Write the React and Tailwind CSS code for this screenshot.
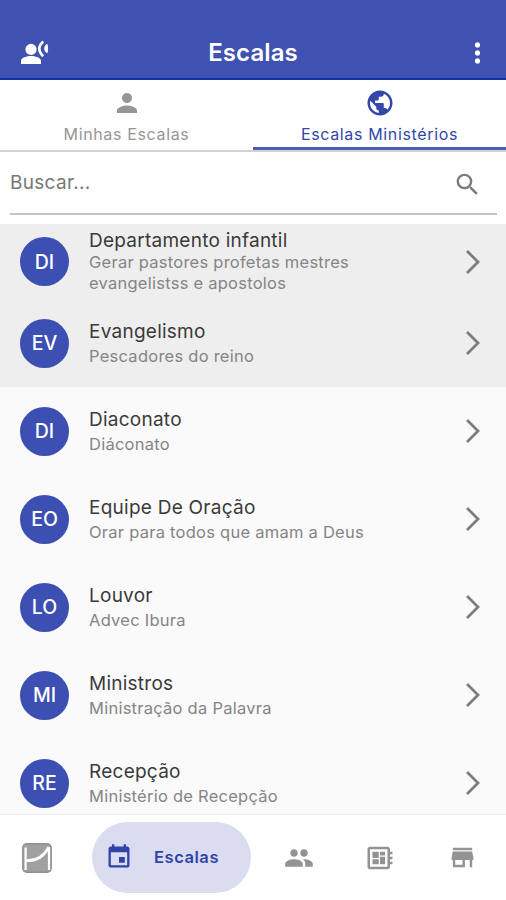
import { useState } from "react";
import {
  MdDeveloperBoard,
  MdEvent,
  MdMoreVert,
  MdPeople,
  MdPerson,
  MdPublic,
  MdSearch,
  MdStore,
} from "react-icons/md";

const ministries = [
  { initials: "DI", name: "Departamento infantil", description: "Gerar pastores profetas mestres evangelistss e apostolos", highlighted: true },
  { initials: "EV", name: "Evangelismo", description: "Pescadores do reino", highlighted: true },
  { initials: "DI", name: "Diaconato", description: "Diáconato" },
  { initials: "EO", name: "Equipe De Oração", description: "Orar para todos que amam a Deus" },
  { initials: "LO", name: "Louvor", description: "Advec Ibura" },
  { initials: "MI", name: "Ministros", description: "Ministração da Palavra" },
  { initials: "RE", name: "Recepção", description: "Ministério de Recepção" },
];

const VoiceIcon = () => (
  <svg viewBox="0 0 30 26" className="h-[26px] w-[30px]" fill="currentColor">
    <circle cx="11" cy="9.4" r="5.6" />
    <path d="M1 24 V21 C1 17.4 7 16 11 16 C15 16 21 17.4 21 21 V24 Z" />
    <path d="M23.2 1.4 C18 5.8 18 11.7 23.2 16.2" fill="none" stroke="currentColor" strokeWidth="2.6" />
    <path d="M27.2 3.8 C23.2 6.2 23.2 11 27.2 13.4 C28.4 11 28.4 6.2 27.2 3.8 Z" />
  </svg>
);

const Header = () => (
  <header className="flex h-20 shrink-0 items-end justify-between border-b-2 border-[#1631a2] bg-[#3f51b1] pr-3 pb-[9px] pl-5 text-white">
    <button className="flex h-8 w-[33px] items-center">
      <VoiceIcon />
    </button>
    <h1 className="mr-2 text-[24px] leading-8 font-semibold tracking-[0.1px]">Escalas</h1>
    <button className="flex h-8 w-[33px] items-center">
      <MdMoreVert className="h-8 w-[33px] shrink-0" />
    </button>
  </header>
);

const Tab = ({ icon: Icon, label, active, onClick }) => (
  <button
    onClick={onClick}
    className={`flex flex-1 flex-col items-center border-b-[3px] pt-2 ${
      active ? "border-[#4c5db5] text-[#3347aa]" : "border-transparent text-[#969696]"
    }`}
  >
    <Icon className="h-[30px] w-[30px]" />
    <span className="mt-1.5 text-[16px] leading-5 tracking-[0.65px]">{label}</span>
  </button>
);

const Chevron = () => (
  <svg viewBox="0 0 16 26" className="h-[26px] w-4 shrink-0" fill="none" stroke="#7d7d7d" strokeWidth="2.8">
    <path d="M2 2 L13 13 L2 24" />
  </svg>
);

const MinistryRow = ({ initials, name, description, highlighted }) => {
  const isLong = description.length > 40;

  return (
    <li
      className={`flex shrink-0 items-center pr-[25px] pl-5 ${isLong ? "h-[75px]" : "h-22"} ${
        highlighted ? "bg-[#eeeeee]" : ""
      }`}
    >
      <div className="flex h-[49px] w-[49px] shrink-0 items-center justify-center rounded-full bg-[#3c4fb3] pt-0.5 text-[19.5px] font-medium text-white">
        {initials}
      </div>
      <div className={`ml-5 flex-1 ${isLong ? "" : "pt-0.5"}`}>
        <p className={`text-[19px] tracking-[0.25px] text-[#3a3a3a] ${isLong ? "leading-[22px]" : "leading-[25px]"}`}>
          {name}
        </p>
        <p
          className={`w-[300px] text-[16.5px] tracking-[0.25px] text-[#858585] ${
            isLong ? "leading-[21px]" : "leading-[25px]"
          }`}
        >
          {description}
        </p>
      </div>
      <Chevron />
    </li>
  );
};

const LogoIcon = () => (
  <svg viewBox="0 0 30 30" className="h-[30px] w-[30px]" fill="none">
    <rect x="0.8" y="0.8" width="28.4" height="28.4" rx="4" fill="#a0a0a0" stroke="#8f8f8f" strokeWidth="1.4" />
    <path d="M3.6 4.5 V27 M27 4 V27" stroke="#fff" strokeWidth="2.2" />
    <path d="M3.6 17.6 C14 18.5 22 13 27 4" stroke="#fff" strokeWidth="2.7" />
  </svg>
);

const BottomNav = () => (
  <nav className="flex h-[86px] shrink-0 items-center border-t border-[#f0f0f0] bg-white pl-[22px] text-[#939393]">
    <button>
      <LogoIcon />
    </button>
    <button className="ml-10 flex h-[71px] w-[159px] items-center rounded-[36px] bg-[#d9ddef] pl-[13px] text-[#3143a9]">
      <MdEvent className="mb-px h-[28px] w-[28px]" />
      <span className="ml-[21px] text-[16.5px] font-semibold tracking-[0.55px]">Escalas</span>
    </button>
    <button className="ml-[33px]">
      <MdPeople className="h-[30px] w-[30px]" />
    </button>
    <button className="ml-[51px]">
      <MdDeveloperBoard className="h-[30px] w-[30px]" />
    </button>
    <button className="ml-[53px]">
      <MdStore className="h-[29px] w-[29px]" />
    </button>
  </nav>
);

const App = () => {
  const [activeTab, setActiveTab] = useState("ministries");

  return (
    <div className="flex h-[900px] w-[506px] flex-col overflow-hidden bg-[#fafafa] font-['Inter',sans-serif]">
      <Header />

      {/* Tabs */}
      <div className="flex h-[72px] shrink-0 border-b-2 border-[#d3d3d3] bg-white">
        <Tab icon={MdPerson} label="Minhas Escalas" active={activeTab === "mine"} onClick={() => setActiveTab("mine")} />
        <Tab
          icon={MdPublic}
          label="Escalas Ministérios"
          active={activeTab === "ministries"}
          onClick={() => setActiveTab("ministries")}
        />
      </div>

      {/* Search */}
      <div className="h-18 shrink-0 bg-white pr-[9px] pl-[10px]">
        <div className="flex h-[63px] items-center border-b-2 border-[#c4c4c4]">
          <input
            type="text"
            placeholder="Buscar..."
            className="mt-px min-w-0 flex-1 text-[19px] tracking-[0.3px] outline-none placeholder:text-[#777777]"
          />
          <MdSearch className="mt-1 mr-[15px] h-[29px] w-[29px] text-[#7b7b7b]" />
        </div>
      </div>

      <ul className="flex min-h-0 flex-1 flex-col overflow-hidden">
        {ministries.map((ministry) => (
          <MinistryRow key={ministry.name} {...ministry} />
        ))}
      </ul>

      <BottomNav />
    </div>
  );
};

export default App;
